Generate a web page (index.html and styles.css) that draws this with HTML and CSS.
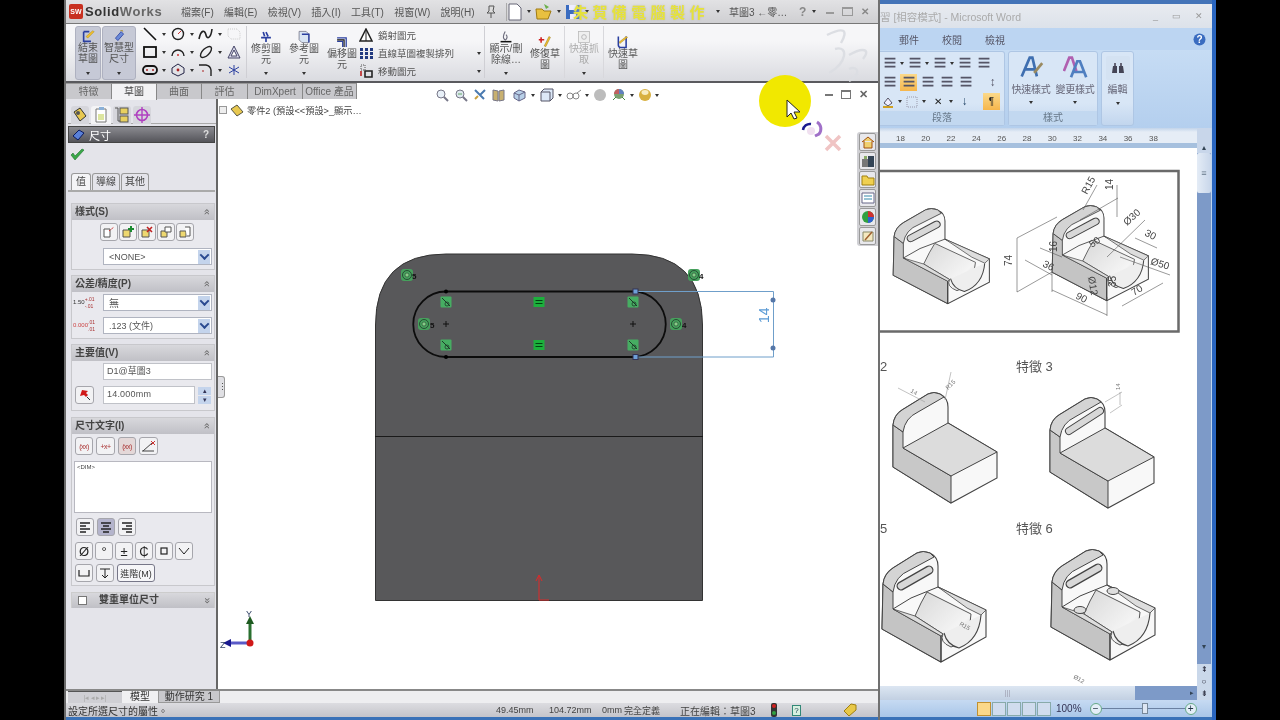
FILE: index.html
```html
<!DOCTYPE html>
<html lang="zh-Hant">
<head><meta charset="utf-8"><title>SolidWorks</title><link rel="stylesheet" href="styles.css"></head>
<body>
<div class="screen">
  <div class="sw">
    <header class="sw-title">
      <div class="logo"><span class="logo-mark">SW</span><span class="logo-solid">Solid</span><span class="logo-works">Works</span></div>
      <nav class="menu"><span>檔案(F)</span><span>編輯(E)</span><span>檢視(V)</span><span>插入(I)</span><span>工具(T)</span><span>視窗(W)</span><span>說明(H)</span></nav>
      <svg class="pin" width="12" height="14" viewBox="0 0 12 14"><path d="M4 1h5l-1 5 2 2H2l2-2zM6 8v5" fill="#ddd" stroke="#555"/></svg>
      <div class="quick">
        <svg width="16" height="18" viewBox="0 0 16 18"><path d="M2 1h8l4 4v12H2z" fill="#fff" stroke="#667"/></svg><i class="caret"></i>
        <svg width="18" height="18" viewBox="0 0 18 18"><path d="M1 6h6l2 2h7l-3 8H2z" fill="#e8c040" stroke="#a07a10"/><path d="M9 1l5 3-3 2" fill="#6ab04a"/></svg><i class="caret"></i>
        <svg width="16" height="16" viewBox="0 0 16 16"><path d="M1 1h14v14H1z" fill="#3a6cc0"/><path d="M4 1h8v5H4zM5 10h6v5H5z" fill="#eef"/></svg><i class="caret"></i>
      </div>
      <div class="banner">朱賀備電腦製作</div>
      <i class="caret cb"></i>
      <span class="doc-name">草圖3 ←零…</span>
      <span class="help">?</span><i class="caret"></i>
      <div class="win-btns"><span class="wb-min"></span><span class="wb-max"></span><span class="wb-x">✕</span></div>
    </header>

    <section class="ribbon">
      <div class="rb-big rb-on"><svg width="18" height="16" viewBox="0 0 18 16"><path d="M3 2v12h9M3 2h7" fill="none" stroke="#2a3fa0" stroke-width="2"/><path d="M8 10l8-8-2-1-8 7z" fill="#f0c030" stroke="#a08010" stroke-width=".5"/></svg><b>結束<br>草圖</b><i class="caret"></i></div>
      <div class="rb-big rb-on rb-wide"><svg width="16" height="16" viewBox="0 0 16 16"><path d="M3 10l7-8 3 3-7 8z" fill="#6a8ad8" stroke="#2a3fa0"/><path d="M9 1l2-1 1 2" fill="none" stroke="#a08010"/></svg><b>智慧型<br>尺寸</b><i class="caret"></i></div>
      <div class="tool-grid">
        <svg width="16" height="14" viewBox="0 0 16 14"><path d="M2 1l12 12" stroke="#111" stroke-width="1.6"/></svg><i class="caret"></i>
        <svg width="16" height="14" viewBox="0 0 16 14"><circle cx="8" cy="7" r="5.5" fill="none" stroke="#222" stroke-width="1.4"/><path d="M8 7l3-3" stroke="#c33"/></svg><i class="caret"></i>
        <svg width="16" height="14" viewBox="0 0 16 14"><path d="M1 12C3 2 7 3 8 8s5 3 6-6" fill="none" stroke="#222" stroke-width="1.6"/></svg><i class="caret"></i>
        <svg width="16" height="14" viewBox="0 0 16 14"><path d="M2 2h9l3 3v7H5l-3-3z" fill="none" stroke="#ccc" stroke-dasharray="1 1"/></svg>
        <svg width="16" height="14" viewBox="0 0 16 14"><rect x="2" y="2" width="12" height="10" fill="none" stroke="#111" stroke-width="1.8"/></svg><i class="caret"></i>
        <svg width="16" height="14" viewBox="0 0 16 14"><path d="M2 11a6 6 0 0 1 12 0" fill="none" stroke="#222" stroke-width="1.4"/><circle cx="8" cy="10" r="1" fill="#c33"/></svg><i class="caret"></i>
        <svg width="16" height="14" viewBox="0 0 16 14"><ellipse cx="8" cy="7" rx="7" ry="3.4" transform="rotate(-45 8 7)" fill="none" stroke="#222" stroke-width="1.4"/></svg><i class="caret"></i>
        <svg width="16" height="14" viewBox="0 0 16 14"><path d="M8 1l6 12H2z" fill="#dde" stroke="#446"/><path d="M8 5l3 6H5z" fill="#fff" stroke="#446"/></svg>
        <svg width="16" height="14" viewBox="0 0 16 14"><rect x="1" y="3" width="14" height="8" rx="4" fill="none" stroke="#111" stroke-width="1.8"/><circle cx="5" cy="7" r="1" fill="#a22"/><circle cx="11" cy="7" r="1" fill="#a22"/></svg><i class="caret"></i>
        <svg width="16" height="14" viewBox="0 0 16 14"><path d="M8 1l6 4v5l-6 3-6-3V5z" fill="none" stroke="#224"/><circle cx="8" cy="7" r="1.4" fill="#a22"/></svg><i class="caret"></i>
        <svg width="16" height="14" viewBox="0 0 16 14"><path d="M1 2h7a6 6 0 0 1 5 5v6" fill="none" stroke="#222" stroke-width="1.4"/><path d="M4 8h2" stroke="#a22"/></svg><i class="caret"></i>
        <svg width="16" height="14" viewBox="0 0 16 14"><path d="M8 2v10M3 4l10 6M13 4L3 10" stroke="#2a3fa0"/></svg>
      </div>
      <i class="rb-sep"></i>
      <div class="rb-col"><svg width="14" height="14" viewBox="0 0 20 20"><path d="M3 11h14M10 3l3 6M6 3l2 6M10 11v6" fill="none" stroke="#2a3fa0" stroke-width="2.400"/></svg><b>修剪圖<br>元</b><i class="caret"></i></div>
      <div class="rb-col"><svg width="14" height="14" viewBox="0 0 20 20"><path d="M3 2h10l4 4v12H7l-4-4z" fill="#d8e4f4" stroke="#667"/><path d="M7 6h10v12" fill="none" stroke="#2a3fa0" stroke-width="2"/></svg><b>參考圖<br>元</b><i class="caret"></i></div>
      <div class="rb-col rb-low"><svg width="14" height="14" viewBox="0 0 20 20"><path d="M3 4h13v13M3 9h8v8" fill="none" stroke="#2a3fa0" stroke-width="1.800"/><path d="M3 7h10v10" fill="none" stroke="#111" stroke-width="1.600"/></svg><b>偏移圖<br>元</b></div>
      <div class="rb-list">
        <div><svg width="14" height="14" viewBox="0 0 14 14"><path d="M7 1l6 12H1z" fill="#fff" stroke="#222" stroke-width="1.5"/><path d="M7 1v12" stroke="#222"/></svg><span>鏡射圖元</span></div>
        <div><svg width="14" height="14" viewBox="0 0 14 14"><path d="M1 2h3v3H1zM6 2h3v3H6zM11 2h3v3h-3zM1 6h3v3H1zM6 6h3v3H6zM11 6h3v3h-3zM1 10h3v3H1zM6 10h3v3H6zM11 10h3v3h-3z" fill="#223a80"/></svg><span>直線草圖複製排列</span><i class="caret"></i></div>
        <div><svg width="14" height="14" viewBox="0 0 14 14"><path d="M2 1h4v5H2z" fill="none" stroke="#555" stroke-dasharray="1 1"/><path d="M6 7h7v6H6z" fill="none" stroke="#222" stroke-width="1.6"/><path d="M2 7v5" stroke="#b22" stroke-width="1.6"/></svg><span>移動圖元</span><i class="caret"></i></div>
      </div>
      <i class="rb-sep"></i>
      <div class="rb-col rb-col-d"><svg width="14" height="14" viewBox="0 0 18 18"><path d="M2 15h14" stroke="#111" stroke-width="2"/><path d="M8 2c-3 5-3 9 0 11 3-2 3-5 1-7" fill="none" stroke="#667" stroke-width="1.4"/></svg><b>顯示/刪<br>除線…</b><i class="caret"></i></div>
      <div class="rb-col rb-low"><svg width="14" height="14" viewBox="0 0 18 18"><path d="M4 3v7M1 6h7" stroke="#d02020" stroke-width="2"/><path d="M10 15l6-12-2-1-6 12z" fill="#f0c030" stroke="#907010" stroke-width=".6"/></svg><b>修復草<br>圖</b></div>
      <i class="rb-sep rb-sep-f"></i>
      <div class="rb-col rb-dim"><svg width="14" height="14" viewBox="0 0 18 18"><rect x="2" y="2" width="14" height="14" fill="#eee" stroke="#aaa"/><circle cx="9" cy="9" r="3" fill="none" stroke="#999"/></svg><b>快速抓<br>取</b><i class="caret"></i></div>
      <i class="rb-sep rb-sep-f"></i>
      <div class="rb-col rb-low"><svg width="14" height="14" viewBox="0 0 18 18"><path d="M3 2v11q0 3 3 3h7V2" fill="none" stroke="#2a3fa0" stroke-width="2"/><path d="M5 11l10-8-2-1-9 7z" fill="#f0c030" stroke="#907010" stroke-width=".5"/></svg><b>快速草<br>圖</b></div>
      <svg class="ds" width="56" height="56" viewBox="0 0 56 56"><path d="M14 8C30 0 36 2 28 16M22 22c14-4 12 14-6 24M36 28c14-8 22-6 14 4M36 42c10-4 12 6 0 12" fill="none" stroke="#dcdee3" stroke-width="2.400"/></svg>
    </section>

    <div class="tab-row">
      <div class="cm-tabs"><span class="t1">特徵</span><span class="t2 cm-active">草圖</span><span class="t3">曲面</span><span class="t4">評估</span><span class="t5">DimXpert</span><span class="t6">Office 產品</span></div>
      <div class="viewbar">
        <svg width="14" height="14" viewBox="0 0 14 14"><circle cx="6" cy="6" r="4" fill="#e8f0f8" stroke="#778"/><path d="M9 9l4 4" stroke="#778" stroke-width="2"/></svg>
        <svg width="14" height="14" viewBox="0 0 14 14"><circle cx="6" cy="6" r="4" fill="#dde8ee" stroke="#778"/><path d="M9 9l4 4" stroke="#778" stroke-width="2"/><path d="M4 6h4" stroke="#6a6"/></svg>
        <svg width="14" height="14" viewBox="0 0 14 14"><path d="M2 2l9 9M12 2L7 7" stroke="#4a7ab0" stroke-width="2"/><path d="M2 11l3-3" stroke="#c9a040" stroke-width="2"/></svg>
        <svg width="14" height="14" viewBox="0 0 14 14"><path d="M1 2l5 1v10l-5-1zM7 3l5-1v10l-5 1z" fill="#c8b070" stroke="#778"/></svg>
        <svg class="v-gap" width="16" height="14" viewBox="0 0 16 14"><path d="M2 5l5-3 6 2v6l-6 3-5-3z" fill="#b8d0e8" stroke="#668"/><path d="M2 5l5 2 6-3M7 7v6" fill="none" stroke="#668"/></svg><i class="caret"></i>
        <svg class="v-gap" width="16" height="14" viewBox="0 0 16 14"><path d="M2 4l3-3h9v9l-3 3H2z" fill="#dce8f8" stroke="#556"/><path d="M2 4h9v9" fill="none" stroke="#556"/></svg><i class="caret"></i>
        <svg class="v-gap" width="16" height="14" viewBox="0 0 16 14"><circle cx="4" cy="8" r="3" fill="none" stroke="#888"/><circle cx="10" cy="8" r="3" fill="none" stroke="#888"/><path d="M11 5l4-3" stroke="#888"/></svg><i class="caret"></i>
        <svg class="v-gap" width="14" height="14" viewBox="0 0 14 14"><circle cx="7" cy="7" r="6" fill="#bcbcbc"/></svg>
        <svg class="v-gap" width="16" height="14" viewBox="0 0 16 14"><circle cx="8" cy="6" r="5" fill="#7aa070"/><path d="M3 6a5 5 0 0 1 5-5v5z" fill="#c06060"/><path d="M8 1a5 5 0 0 1 5 5H8z" fill="#6080c0"/><path d="M2 12l3-3M14 12l-3-3" stroke="#484"/></svg><i class="caret"></i>
        <svg class="v-gap" width="14" height="14" viewBox="0 0 14 14"><circle cx="7" cy="7" r="6" fill="#d8b040"/><ellipse cx="7" cy="4.5" rx="3.5" ry="2.4" fill="#f8ecc0"/></svg><i class="caret"></i>
      </div>
      <div class="doc-btns"><span class="db-min"></span><span class="db-max"></span><span class="db-x">✕</span></div>
    </div>

    <div class="work">
      <aside class="side">
        <div class="fm-tabs">
          <svg width="18" height="18" viewBox="0 0 18 18"><path d="M3 6l6-4 6 8-6 5z" fill="#e8c850" stroke="#333"/><circle cx="7" cy="7" r="2" fill="#555"/></svg>
          <svg class="fm-on" width="20" height="18" viewBox="0 0 20 18"><path d="M5 3h10v13H5z" fill="#fff" stroke="#777"/><path d="M7 8h6v6H7z" fill="#dde6a0"/><path d="M8 1h5v3H8z" fill="#8ab0d8"/></svg>
          <svg width="18" height="18" viewBox="0 0 18 18"><path d="M2 2h3v13h9" fill="none" stroke="#555"/><rect x="7" y="2" width="8" height="6" fill="#e8d060" stroke="#555"/><rect x="7" y="10" width="8" height="6" fill="#e8d060" stroke="#555"/></svg>
          <svg width="18" height="18" viewBox="0 0 18 18"><circle cx="9" cy="9" r="5.5" fill="none" stroke="#b040c0" stroke-width="1.6"/><path d="M9 1v16M1 9h16" stroke="#b040c0" stroke-width="1.4"/></svg>
        </div>
        <div class="pm-head"><svg width="14" height="12" viewBox="0 0 14 12"><path d="M1 7l6-6 5 3-6 7z" fill="#5a80d8" stroke="#0a1a60"/></svg><span>尺寸</span><b>?</b></div>
        <svg class="ok" width="15" height="13" viewBox="0 0 15 13"><path d="M1 7l4 5 9-10-2-1-7 7-2-3z" fill="#3aa848" stroke="#207030" stroke-width=".6"/></svg>
        <div class="sub-tabs"><span class="st-on">值</span><span>導線</span><span>其他</span></div>

        <section class="group g-style">
          <h3>樣式(S)<i class="chev">»</i></h3>
          <div class="five">
            <span class="ib"><svg width="12" height="12" viewBox="0 0 12 12"><path d="M1 3h6v8H1z" fill="#fff" stroke="#555"/><path d="M6 5l5-4" stroke="#c33" stroke-dasharray="2 1"/></svg></span>
            <span class="ib"><svg width="12" height="12" viewBox="0 0 12 12"><path d="M1 4h7v7H1z" fill="#eed870" stroke="#555"/><path d="M9 0v6M6 3h6" stroke="#1a8a30" stroke-width="2"/></svg></span>
            <span class="ib"><svg width="12" height="12" viewBox="0 0 12 12"><path d="M1 4h7v7H1z" fill="#eed870" stroke="#555"/><path d="M6 1l5 5M11 1L6 6" stroke="#c02020" stroke-width="1.6"/></svg></span>
            <span class="ib"><svg width="12" height="12" viewBox="0 0 12 12"><path d="M1 5h6v6H1z" fill="#eed870" stroke="#555"/><path d="M5 1h6v5H5z" fill="#fff" stroke="#555"/></svg></span>
            <span class="ib"><svg width="12" height="12" viewBox="0 0 12 12"><path d="M1 5h6v6H1z" fill="#eed870" stroke="#555"/><path d="M6 1h5v9H8" fill="#fff" stroke="#555"/></svg></span>
          </div>
          <div class="sel sel-a"><span>&lt;NONE&gt;</span><i class="drop"></i></div>
        </section>

        <section class="group g-tol">
          <h3>公差/精度(P)<i class="chev">»</i></h3>
          <div class="row-sel"><span class="tol-ico">1.50<small>+.01<br>-.01</small></span><div class="sel"><span class="lg">無</span><i class="drop"></i></div></div>
          <div class="row-sel r2"><span class="tol-ico red">0.000<small>.01<br>.01</small></span><div class="sel"><span>.123 (文件)</span><i class="drop"></i></div></div>
        </section>

        <section class="group g-prim">
          <h3>主要值(V)<i class="chev">»</i></h3>
          <div class="field f1">D1@草圖3</div>
          <div class="val-row">
            <span class="ib flip"><svg width="12" height="12" viewBox="0 0 12 12"><path d="M1 7l2-6 6 1-2 2 2 2-2 2-2-2z" fill="#d01818"/><path d="M8 8l3 3" stroke="#333"/></svg></span>
            <div class="field f2">14.000mm</div>
            <div class="spin"><i>▴</i><i>▾</i></div>
          </div>
        </section>

        <section class="group g-text">
          <h3>尺寸文字(I)<i class="chev">»</i></h3>
          <div class="ib-row r-top">
            <span class="ib w17 red-t">(xx)</span><span class="ib w19 red-t">+x+</span><span class="ib w18 red-t box-t">(xx)</span><span class="ib w19"><svg width="16" height="13" viewBox="0 0 16 13"><path d="M1 11h12M2 11l9-8" stroke="#444"/><path d="M10 1l4 4M14 1l-4 4" stroke="#c33"/></svg></span>
          </div>
          <div class="dim-text">&lt;DIM&gt;</div>
          <div class="ib-row r-align">
            <span class="ib w18"><svg width="12" height="11" viewBox="0 0 12 11"><path d="M1 1h10M1 4h6M1 7h10M1 10h6" stroke="#222" stroke-width="1.3"/></svg></span>
            <span class="ib w18 ib-on"><svg width="12" height="11" viewBox="0 0 12 11"><path d="M1 1h10M3 4h6M1 7h10M3 10h6" stroke="#222" stroke-width="1.3"/></svg></span>
            <span class="ib w18"><svg width="12" height="11" viewBox="0 0 12 11"><path d="M1 1h10M5 4h6M1 7h10M5 10h6" stroke="#222" stroke-width="1.3"/></svg></span>
          </div>
          <div class="ib-row r-sym">
            <span class="ib w18 sym">Ø</span><span class="ib w18 sym">°</span><span class="ib w18 sym">±</span><span class="ib w18 sym">₵</span><span class="ib w18"><svg width="10" height="10" viewBox="0 0 10 10"><rect x="2" y="2" width="6" height="6" fill="none" stroke="#222" stroke-width="1.2"/></svg></span><span class="ib w18"><svg width="12" height="8" viewBox="0 0 12 8"><path d="M1 1l5 6 5-6" fill="none" stroke="#222"/></svg></span>
          </div>
          <div class="ib-row r-adv">
            <span class="ib w18"><svg width="12" height="8" viewBox="0 0 12 8"><path d="M1 1v6h10V1" fill="none" stroke="#222" stroke-width="1.2"/></svg></span>
            <span class="ib w18"><svg width="12" height="12" viewBox="0 0 12 12"><path d="M1 2h10M6 2v9M3 8l3 3 3-3" fill="none" stroke="#222"/></svg></span>
            <span class="ib adv">進階(M)</span>
          </div>
        </section>

        <section class="group g-dual">
          <h3><i class="check"></i>雙重單位尺寸<i class="chev chev-d">»</i></h3>
        </section>
        <span class="grip">⋮</span>
      </aside>

      <div class="canvas">
        <div class="crumb"><i class="plus"></i><svg width="14" height="13" viewBox="0 0 14 13"><path d="M1 5l6-4 6 7-6 4z" fill="#e8c850" stroke="#554"/></svg><span>零件2 (預設&lt;&lt;預設&gt;_顯示…</span></div>
        <svg class="draw" width="660" height="591" viewBox="218 99 660 591">
          <defs>
            <g id="rel"><rect x="-5.500" y="-5.500" width="11" height="11" rx="1" fill="#46ad62"/><path d="M-4-4l8 8" stroke="#1d3a28"/><circle cx="1" cy="2" r="2" fill="none" stroke="#1d3a28" stroke-width=".8"/></g>
            <g id="eq"><rect x="-5.500" y="-5" width="11" height="10" fill="#1cb03c"/><path d="M-3.500-1.500h7M-3.500 1.500h7" stroke="#041"/></g>
            <g id="con"><rect x="-6" y="-6" width="12" height="12" rx="3" fill="#46a05c"/><circle r="4.500" fill="none" stroke="#1d3a28" stroke-width=".8"/><circle r="2" fill="#8c8" stroke="#1d3a28" stroke-width=".5"/></g>
          </defs>
          <path d="M375.500 600.500V325Q375.500 254 446 254H632Q702.500 254 702.500 325V600.500Z" fill="#58585a" stroke="#333"/>
          <path d="M375 436.500h328" stroke="#1a1a1a"/>
          <path d="M446 291.500H633A32.750 32.750 0 0 1 633 357H446A32.750 32.750 0 0 1 446 291.500Z" fill="none" stroke="#0c0c0c" stroke-width="1.800"/>
          <circle cx="446" cy="291.500" r="2" fill="#000"/><circle cx="446" cy="357" r="2" fill="#000"/>
          <path d="M443 324h6M446 321v6M630 324h6M633 321v6" stroke="#111"/>
          <use href="#rel" x="446" y="302"/><use href="#rel" x="446" y="345"/><use href="#rel" x="633" y="302"/><use href="#rel" x="633" y="345"/>
          <use href="#eq" x="539" y="302"/><use href="#eq" x="539" y="345"/>
          <use href="#con" x="424" y="324"/><use href="#con" x="676" y="324"/><use href="#con" x="407" y="275"/><use href="#con" x="694" y="275"/>
          <g class="rel-no"><text x="430" y="328">5</text><text x="682" y="328">4</text><text x="412" y="279">5</text><text x="699" y="279">4</text></g>
          <path d="M636 291.500H773.500V357H636" fill="none" stroke="#6f9fca"/>
          <circle cx="773" cy="300" r="2.500" fill="#5577a8"/><circle cx="773" cy="348" r="2.500" fill="#5577a8"/>
          <rect x="633" y="289" width="5" height="5" fill="#6f9fd8" stroke="#335"/><rect x="633" y="354.500" width="5" height="5" fill="#6f9fd8" stroke="#335"/>
          <text class="dim-14" transform="translate(769 323) rotate(-90)">14</text>
          <path d="M539 600v-24M536 581l3-6 3 6M539 600h10" fill="none" stroke="#e02828"/>
          <path d="M250 643v-20" stroke="#2a7030" stroke-width="3"/><path d="M246 624l4-8 4 8z" fill="#1e5a20"/>
          <path d="M250 643h-20" stroke="#5a5ac8" stroke-width="3"/><path d="M231 639l-8 4 8 4z" fill="#1a1a90"/>
          <circle cx="250" cy="643" r="3.500" fill="#d01818"/>
          <text class="axis" x="246" y="617">Y</text><text class="axis" x="220" y="648">Z</text>
        </svg>
        <div class="taskpane">
          <span><svg width="14" height="14" viewBox="0 0 14 14"><path d="M1 7l6-5 6 5M3 6v7h8V6" fill="#f0d070" stroke="#a05010"/></svg></span>
          <span><svg width="14" height="14" viewBox="0 0 14 14"><path d="M1 5h6v8H1z" fill="#777"/><path d="M7 2h6v11H7z" fill="#345"/><path d="M3 2h3v3H3z" fill="#8a6"/></svg></span>
          <span><svg width="14" height="14" viewBox="0 0 14 14"><path d="M1 3h5l1 2h6v7H1z" fill="#f0d050" stroke="#a08010"/></svg></span>
          <span><svg width="14" height="14" viewBox="0 0 14 14"><path d="M1 2h12v10H1z" fill="#fff" stroke="#668"/><path d="M3 5h8M3 8h8" stroke="#38a"/></svg></span>
          <span><svg width="14" height="14" viewBox="0 0 14 14"><circle cx="7" cy="7" r="6" fill="#30a040"/><path d="M7 1a6 6 0 0 1 6 6H7z" fill="#d03030"/><path d="M7 7h6a6 6 0 0 1-6 6z" fill="#3060d0"/></svg></span>
          <span><svg width="14" height="14" viewBox="0 0 14 14"><path d="M2 3h10v9H2z" fill="#f4e8c0" stroke="#886"/><path d="M4 11l7-8" stroke="#a06030" stroke-width="1.5"/></svg></span>
        </div>
      </div>
    </div>

    <div class="model-row">
      <div class="nav-arrows"><i>|◂</i><i>◂</i><i>▸</i><i>▸|</i></div>
      <span class="mt-on">模型</span><span class="mt-off">動作研究 1</span>
    </div>
    <footer class="status">
      <span class="st-msg">設定所選尺寸的屬性。</span>
      <span class="st-a">49.45mm</span><span class="st-b">104.72mm</span><span class="st-c">0mm</span><span class="st-d">完全定義</span><span class="st-e">正在編輯：草圖3</span>
      <svg class="st-light" width="8" height="14" viewBox="0 0 8 14"><rect x="1" y="0" width="6" height="14" rx="2" fill="#333"/><circle cx="4" cy="3" r="2" fill="#d02020"/><circle cx="4" cy="10" r="2" fill="#30a040"/></svg>
      <span class="st-q">?</span>
      <svg class="st-tag" width="14" height="14" viewBox="0 0 14 14"><path d="M1 8l7-7 5 1 0 5-7 6z" fill="#e8c848" stroke="#a08010"/></svg>
    </footer>

    <div class="spot"></div>
    <svg class="cursor" width="76" height="70" viewBox="0 0 76 70"><path d="M2 2v17l4-4 3 6 3-1-3-6h6z" fill="#fff" stroke="#222"/><path d="M26 26a7 7 0 0 0-8 6" fill="none" stroke="#1a1a90" stroke-width="2.500"/><path d="M32 24a8 8 0 0 1 2 12l-4 2" fill="none" stroke="#a070c8" stroke-width="3"/><circle cx="26" cy="33" r="4" fill="#f0e0f0"/><path d="M41 38l14 14M55 38L41 52" stroke="#f0c4c4" stroke-width="3.500"/></svg>
  </div>

  <div class="word">
    <div class="wd-top"></div>
    <header class="wd-title"><span>習 [相容模式] - Microsoft Word</span><div class="wd-btns"><i>_</i><i>▭</i><i>✕</i></div></header>
    <nav class="wd-tabs"><span>郵件</span><span>校閱</span><span>檢視</span><svg width="13" height="13" viewBox="0 0 13 13"><circle cx="6.500" cy="6.500" r="6" fill="#3a6cc0"/><text class="wd-q" x="6.500" y="10">?</text></svg></nav>
    <section class="wd-ribbon">
      <div class="wg wg-para">
        <div class="wg-rows">
          <div class="wr wr1"><span>☰</span><i class="caret"></i><span>☰</span><i class="caret"></i><span>☰</span><i class="caret"></i><span>☰</span><span>☰</span></div>
          <div class="wr wr2"><span>☰</span><span class="hot">☰</span><span>☰</span><span>☰</span><span>☰</span><b class="gap"></b><span>↕</span></div>
          <div class="wr wr3"><svg width="14" height="14" viewBox="0 0 14 14"><path d="M3 8l4-5 4 5-4 3z" fill="#eef" stroke="#556"/><path d="M2 12h10" stroke="#d0a020" stroke-width="2"/></svg><i class="caret"></i><svg width="14" height="14" viewBox="0 0 14 14"><rect x="2" y="2" width="10" height="10" fill="none" stroke="#99a" stroke-dasharray="1 1"/></svg><i class="caret"></i><span class="bk">✕</span><i class="caret"></i><span class="az">↓</span><span class="hot bk hot2">¶</span></div>
        </div>
        <label>段落</label>
      </div>
      <div class="wg wg-style">
        <div class="big-row">
          <div><svg width="25" height="25" viewBox="0 0 28 28"><path d="M3 24L12 3h3l5 21M7 16h10" fill="none" stroke="#3f6fb0" stroke-width="3"/><path d="M17 20l9-11" stroke="#9a8a60" stroke-width="3"/></svg><span>快速樣式</span><i class="caret"></i></div>
          <div><svg width="25" height="25" viewBox="0 0 28 28"><path d="M1 18L7 3h3l5 15" fill="none" stroke="#b060b0" stroke-width="3"/><path d="M9 25l7-18h3l7 18M12 19h11" fill="none" stroke="#4f7fc0" stroke-width="3"/></svg><span>變更樣式</span><i class="caret"></i></div>
        </div>
        <label>樣式</label>
      </div>
      <div class="wg wg-edit">
        <span class="bino"><svg width="14" height="12" viewBox="0 0 14 12"><path d="M2 4h4v7H1zM8 4h4l1 7H8z" fill="#445"/><path d="M3 1h2v3H3zM9 1h2v3H9z" fill="#667"/></svg></span>
        <span>編輯</span><i class="caret"></i>
      </div>
    </section>
    <div class="wd-main">
      <div class="wd-doc">
        <div class="ruler"><span>18</span><span>20</span><span>22</span><span>24</span><span>26</span><span>28</span><span>30</span><span>32</span><span>34</span><span>36</span><span>38</span></div>
        <svg class="sheet" width="317" height="538" viewBox="880 148 317 538">
          <defs>
            <linearGradient id="gr" x1="0" y1="0" x2="1" y2="1"><stop offset="0" stop-color="#d8d8d8"/><stop offset=".7" stop-color="#f4f4f4"/><stop offset="1" stop-color="#c8c8c8"/></linearGradient>
            <g id="block">
              <path d="M1052 582Q1053 572 1062 566L1086 551Q1092 548 1099 551Q1107 555 1107 564V585L1155 608V635L1110 660L1051 627Z" fill="#f8f8f8" stroke="#444" stroke-width="1.100"/>
              <path d="M1052 582L1062 590V607L1110 634V660L1051 627Z" fill="#c4c4c4" stroke="#444" stroke-width="1"/>
              <path d="M1052 582Q1053 572 1062 566L1086 551Q1092 548 1099 551L1103 555L1079 568Q1064 574 1062 590Z" fill="#d4d4d4" stroke="#444" stroke-width="1"/>
              <path d="M1070 584L1098 568" stroke="#444" stroke-width="9" stroke-linecap="round"/><path d="M1070 584L1098 568" stroke="#d8d8d8" stroke-width="6.500" stroke-linecap="round"/>
              <path d="M1062 607L1080 596L1107 585" fill="none" stroke="#444" stroke-width="1"/>
              <path d="M1096 590L1140 612Q1138 640 1120 645Q1108 640 1112 632L1084 614Q1090 600 1096 590Z" fill="url(#gr)" stroke="#555" stroke-width="1"/>
              <path d="M1107 585L1155 608L1150 613L1136 606Z" fill="#ddd" stroke="#444" stroke-width=".8"/>
              <path d="M1062 607L1084 614L1112 632L1110 634Z" fill="#ddd" stroke="#444" stroke-width=".8"/>
              <path d="M1150 613Q1148 638 1128 646Q1116 643 1113 631" fill="#eee" stroke="#444" stroke-width="1.100"/>
              <path d="M1110 634V660" stroke="#333" stroke-width="1"/>
            </g>
            <g id="slab">
              <path d="M893 425Q894 415 902 410L928 394Q934 391 940 394Q948 398 948 407V423L997 452V478L951 503L893 467Z" fill="#f8f8f8" stroke="#444" stroke-width="1.100"/>
              <path d="M893 425L903 432V448L951 476V503L893 467Z" fill="#c8c8c8" stroke="#444"/>
              <path d="M903 448L948 423L997 452L951 476Z" fill="#dcdcdc" stroke="#444"/>
              <path d="M893 425Q894 415 902 410L928 394Q934 391 940 394L944 397L918 412Q905 418 903 432Z" fill="#d4d4d4" stroke="#444"/>
            </g>
          </defs>
          <rect x="875" y="171" width="303.500" height="160.500" fill="#fff" stroke="#6a6a6a" stroke-width="2.500"/>
          <use href="#block" transform="translate(-79 -264) scale(.925 .86)"/>
          <use href="#block" transform="translate(80 -267) scale(.925 .86)"/>
          <path class="dims" fill="none" d="M1017 238V292M1017 238L1057 217M1017 292L1052 272M1025 260L1052 275M1040 248L1062 257M1052 272V292M1052 290L1107 315M1107 297V316M1122 306L1163 283M1097 185L1083 210M1117 185V217M1118 198L1080 220M1145 220L1107 257M1135 238L1157 248M1120 257L1170 275"/>
          <g class="dim-t">
            <text transform="translate(1012 266) rotate(-90)">74</text>
            <text transform="translate(1042 266) rotate(28)">36</text>
            <text transform="translate(1057 252) rotate(-90)">16</text>
            <text transform="translate(1075 298) rotate(28)">90</text>
            <text transform="translate(1088 277) rotate(80)">Ø12</text>
            <text transform="translate(1116 287) rotate(-90)">35</text>
            <text transform="translate(1134 296) rotate(-32)">70</text>
            <text transform="translate(1087 195) rotate(-62)">R15</text>
            <text transform="translate(1113 190) rotate(-90)">14</text>
            <text transform="translate(1127 226) rotate(-42)">Ø30</text>
            <text transform="translate(1144 235) rotate(28)">30</text>
            <text transform="translate(1150 264) rotate(18)">Ø50</text>
            <text transform="translate(1092 248) rotate(-35)">50</text>
          </g>
          <text class="fig" x="880" y="371">2</text><text class="fig" x="1016" y="371">特徵 3</text>
          <text class="fig" x="880" y="533">5</text><text class="fig" x="1016" y="533">特徵 6</text>
          <use href="#slab"/>
          <path class="dims thin" d="M898 388L925 402M951 372L945 400"/>
          <text class="dim-s" transform="translate(910 392) rotate(30)">14</text>
          <text class="dim-s" transform="translate(948 390) rotate(-45)">R15</text>
          <use href="#slab" transform="translate(157 5)"/>
          <path d="M1069 431L1100 411" stroke="#444" stroke-width="8" stroke-linecap="round"/><path d="M1069 431L1100 411" stroke="#d8d8d8" stroke-width="6" stroke-linecap="round"/>
          <path class="dims thin" d="M1105 402L1122 392M1110 413L1122 405M1120 392V405"/>
          <text class="dim-s" transform="translate(1120 390) rotate(-90)">14</text>
          <use href="#block" transform="translate(-169 2)"/>
          <text class="dim-s" transform="translate(959 625) rotate(30)">R15</text>
          <use href="#block"/>
          <ellipse cx="1113" cy="591" rx="6" ry="3.500" fill="#ddd" stroke="#444"/><ellipse cx="1080" cy="610" rx="6" ry="3.500" fill="#ddd" stroke="#444"/>
          <text class="dim-s" transform="translate(1073 678) rotate(30)">Ø12</text>
        </svg>
        <div class="hscroll"><span class="hthumb">|||</span><span class="hrest">▸</span></div>
      </div>
      <div class="wd-scroll">
        <i class="ws-up">▴</i><span class="ws-thumb">≡</span><i class="ws-down">▾</i><i class="ws-s">⇞</i><i class="ws-s">○</i><i class="ws-s">⇟</i>
      </div>
    </div>
    <footer class="wd-status">
      <div class="views"><i class="v-on"></i><i></i><i></i><i></i><i></i></div>
      <span class="pct">100%</span>
      <b class="zoom-btn">−</b><div class="slider"><i></i></div><b class="zoom-btn">+</b>
    </footer>
    <div class="wd-foot"></div>
  </div>
</div>
</body>
</html>
```
FILE: styles.css
```css
*{box-sizing:border-box}
html,body{margin:0;padding:0;background:#000;overflow:hidden}
body{font-family:"Liberation Sans","Noto Sans CJK TC",sans-serif;font-size:10px;color:#444}
svg{display:block;flex:none}
i{font-style:normal}
.screen{width:1280px;height:720px;display:flex;padding:0 64px;filter:blur(.35px)}
.caret{display:block;width:0;height:0;border:2px solid transparent;border-top:3px solid #333;border-bottom:0;flex:none}

.sw{position:relative;width:816px;height:720px;display:flex;flex-direction:column;background:#e6e6ea;border-left:2px solid #6a6a6a;border-right:2px solid #707070}
.sw-title{height:24px;display:flex;align-items:center;background:linear-gradient(#e2e2e4,#cfcfd2);border-bottom:1px solid #777;padding-left:3px}
.logo{display:flex;align-items:center;width:112px;font-size:13px;font-weight:bold;letter-spacing:.6px;flex:none}
.logo-mark{width:14px;height:15px;background:#c83020;color:#fff;font-size:7px;line-height:15px;text-align:center;letter-spacing:0;margin-right:2px;border-radius:2px}
.logo-solid{color:#333}.logo-works{color:#666}
.menu{display:flex;gap:10.300px;font-size:10px;color:#555;width:305px;flex:none}
.menu span{white-space:nowrap}
.pin{margin-left:-1px}
.quick{display:flex;align-items:center;gap:4px;margin-left:9px;width:77px;border-left:1px solid #aaa;flex:none}
.banner{font-size:15px;font-weight:bold;color:#e6e23a;letter-spacing:4.400px;width:140px;white-space:nowrap;margin-left:-10px;flex:none;text-shadow:0 0 2px #bbb}
.cb{margin-left:3px}
.doc-name{margin-left:9px;width:68px;white-space:nowrap;color:#555;font-size:10px;flex:none}
.help{font-size:12px;font-weight:bold;color:#888;margin-left:2px;margin-right:6px}
.win-btns{display:flex;align-items:center;gap:8px;margin-left:10px;color:#888}
.wb-min{width:8px;height:2px;background:#999;margin-top:3px}
.wb-max{width:11px;height:9px;border:1px solid #999;border-top-width:2px}
.wb-x{font-size:10px;font-weight:bold}

.ribbon{position:relative;height:59px;display:flex;background:linear-gradient(#f6f6f8 30%,#dadbe0);border-bottom:2px solid #5a5a5e;padding:2px 0 0 9px}
.ribbon b{font-weight:normal;line-height:10.500px;font-size:10px;color:#555}
.rb-big{width:26px;height:54px;display:flex;flex-direction:column;align-items:center;text-align:center;padding-top:1px;margin-right:1px;border-radius:3px}
.rb-big>svg{width:15px;height:13px;margin-top:2px}
.rb-big .caret{margin-top:auto;margin-bottom:4px}
.rb-wide{width:34px}
.rb-on{background:#c6c9d6;border:1px solid #aeb1c0}
.tool-grid{display:grid;grid-template-columns:16px 12px 16px 12px 16px 12px 16px;grid-template-rows:18px 18px 18px;align-items:center;justify-items:center;margin:-1px 0 0 5px;width:104px;flex:none}
.rb-sep{width:1px;height:52px;background:#cfcfd4;flex:none}
.rb-col{width:38px;display:flex;flex-direction:column;align-items:center;text-align:center;padding-top:3px;height:54px;flex:none}
.rb-col>svg{margin-top:1px}
.rb-col .caret{margin-top:auto;margin-bottom:5px}
.rb-low{padding-top:8px}
.rb-list{width:125px;display:flex;flex-direction:column;margin-left:-2px;flex:none}
.rb-list>div{height:18px;display:flex;align-items:center;gap:5px;font-size:9.500px;color:#555;white-space:nowrap}
.rb-list>div .caret{margin-left:auto;margin-right:3px}
.rb-col-d{margin-left:1px;width:40px}
.rb-dim b{color:#aaa}.rb-dim svg{opacity:.8}
.rb-sep-f{background:#d8d8dc}
.ds{position:absolute;right:9px;top:3px}

.tab-row{height:16px;display:flex;align-items:flex-start;background:#fff;position:relative;z-index:1}
.cm-tabs{display:flex;height:16px;background:#c8c8cc;font-size:10px;color:#666;width:291px;flex:none}
.cm-tabs span{display:block;text-align:center;line-height:15px;border-right:1px solid #888;border-top:1px solid #999;white-space:nowrap}
.t1{width:46px}.t2{width:45px}.t3{width:45px}.t4{width:46px}.t5{width:55px}.t6{width:54px}
.cm-active{background:#f2f2f4;height:17px;color:#444;position:relative}
.viewbar{display:flex;align-items:center;gap:3px;margin:5px 0 0 78px;height:14px;flex:none}
.viewbar svg{margin-right:2px}
.viewbar .v-gap{margin:0 0 0 1px}
.doc-btns{display:flex;align-items:center;gap:8px;margin:5px 10px 0 auto;color:#666}
.db-min{width:8px;height:2px;background:#777}
.db-max{width:10px;height:9px;border:1px solid #777;border-top-width:2px}
.db-x{font-size:11px;font-weight:bold}

.work{flex:1;display:flex;min-height:0}
.side{position:relative;width:152px;flex:none;background:#e4e4ea;border-right:2px solid #666;padding:7px 0 0 2px}
.fm-tabs{display:flex;gap:2px;height:18px;padding-left:3px;align-items:center;border-bottom:1px solid #aaa}
.fm-tabs svg{background:#d6d6dc;border-radius:3px 3px 0 0}
.fm-tabs .fm-on{background:#f4f4f6}
.pm-head{height:17px;margin:2px 1px 0 0;background:linear-gradient(#8a8a90,#55555a);color:#fff;display:flex;align-items:center;gap:3px;padding:0 5px 0 3px;font-size:11px;width:147px;border:1px solid #444}
.pm-head b{margin-left:auto;font-size:10px;color:#ddd}
.ok{margin:5px 0 0 2px}
.sub-tabs{display:flex;gap:1px;margin-top:12px;height:19px;padding-left:3px;border-bottom:2px solid #aaa;width:147px}
.sub-tabs span{border:1px solid #999;border-bottom:0;height:17px;line-height:15px;padding:0 3px;font-size:10px;border-radius:3px 3px 0 0;color:#444}
.st-on{background:#f4f4f6;padding:0 4px !important}

.group{width:144px;margin-left:3px;border:1px solid #c8c8cc;background:#e9e9ee;position:relative}
.group h3{margin:0;height:16px;background:linear-gradient(#d8d8dc,#c0c0c6);font-size:10px;font-weight:bold;color:#444;line-height:15px;padding-left:3px;display:flex;white-space:nowrap}
.chev{margin:0 4px 0 auto;font-weight:normal;font-size:11px;color:#666;line-height:14px;transform:rotate(-90deg)}
.chev-d{transform:rotate(90deg)}
.g-style{margin-top:11px;height:67px}
.five{display:flex;gap:1px;margin:3px 0 0 28px}
.ib{display:flex;align-items:center;justify-content:center;width:18px;height:18px;background:#f2f2f4;border:1px solid #a6a6ac;border-radius:3px;flex:none;font-size:8px;color:#333}
.sel{display:flex;align-items:center;justify-content:space-between;height:17px;width:109px;background:#fff;border:1px solid #b0b4c0;font-size:9px;color:#555;padding:0 1px 0 5px;flex:none}
.sel-a{margin:7px 0 0 31px}
.lg{font-size:10px}
.drop{width:12px;height:14px;background:#c4d4ec;display:flex;align-items:center;justify-content:center;flex:none}
.drop::after{content:"";width:5px;height:5px;border:solid #2a4a90;border-width:0 2px 2px 0;transform:rotate(45deg) translate(-1px,-1px)}
.g-tol{margin-top:5px;height:64px}
.row-sel{display:flex;align-items:center;margin-top:2px;height:17px}
.r2{margin-top:6px}
.tol-ico{width:31px;display:flex;align-items:center;font-size:6px;padding-left:1px;color:#333;line-height:7px}
.tol-ico small{font-size:5px;color:#a33}
.red{color:#c44}
.g-prim{margin-top:5px;height:67px}
.field{height:17px;background:#fff;border:1px solid #c0c2c8;font-size:9px;line-height:15px;padding-left:3px;color:#555}
.f1{width:109px;margin:2px 0 0 31px}
.val-row{display:flex;align-items:center;gap:3px;margin-top:6px}
.flip{margin:0 6px 0 3px;width:19px}
.f2{width:92px;height:18px;letter-spacing:.2px}
.spin{display:flex;flex-direction:column;gap:1px}
.spin i{display:block;width:13px;height:8px;background:#c4d4ec;font-size:7px;line-height:8px;text-align:center;color:#335}
.g-text{margin-top:6px;height:169px}
.ib-row{display:flex;gap:3px}
.r-top{margin:3px 0 0 3px}
.w17{width:18px}.w18{width:18px}.w19{width:19px}
.red-t{color:#a33;font-size:7px;letter-spacing:-.5px}
.box-t{background:#e4d8d8}
.dim-text{width:138px;height:52px;margin:6px 0 0 2px;background:#fff;border:1px solid #b8b8c0;font-size:6px;padding:2px;color:#444}
.r-align{margin:5px 0 0 4px}
.ib-on{background:#b4b4cc}
.r-sym{margin:6px 0 0 3px;gap:2px}
.r-adv{margin:4px 0 0 3px;gap:3px}
.sym{font-size:13px;color:#222}
.adv{width:38px;font-size:9px;background:#f6f6f8;border-color:#778}
.g-dual{margin-top:6px;height:16px;border-color:#ccc}
.g-dual h3{height:15px;line-height:14px}
.check{width:9px;height:9px;background:#fff;border:1px solid #777;margin:3px 12px 0 3px}
.grip{position:absolute;right:-9px;top:277px;width:7px;height:22px;background:#e0e0e4;border:1px solid #999;border-left:0;border-radius:0 3px 3px 0;font-size:9px;line-height:20px;text-align:center;z-index:2}

.canvas{position:relative;flex:1;background:#fff;overflow:hidden}
.crumb{position:absolute;left:1px;top:4px;display:flex;align-items:center;gap:3px;font-size:9.200px;color:#444;white-space:nowrap}
.plus{width:8px;height:8px;border:1px solid #999;background:#eee}
.draw{position:absolute;left:0;top:0}
.rel-no text{font-size:8px;font-weight:bold;fill:#111}
.dim-14{font-size:14px;fill:#5b9bd5}
.axis{font-size:9px;fill:#346}
.taskpane{position:absolute;right:0;top:33px;width:21px;height:114px;background:#d0d0d4;border-radius:3px 0 0 3px;display:flex;flex-direction:column;gap:1px;padding:1px 2px}
.taskpane span{height:18px;display:flex;align-items:center;justify-content:center;background:#e8e8ec;border:1px solid #999;border-radius:2px}

.model-row{height:14px;display:flex;background:#eeeef0;border-top:2px solid #888;padding-left:2px;font-size:10px;line-height:12px;color:#333}
.nav-arrows{width:54px;display:flex;gap:1px;background:#cfcfd4;color:#aaa;font-size:7px;justify-content:center;border-top:1px solid #555}
.mt-on{width:36px;text-align:center;background:#f0f0f2}
.mt-off{width:62px;text-align:center;background:#c8c8cc;border:1px solid #999;border-top:0}
.status{height:14px;display:flex;align-items:center;background:linear-gradient(#dcdce0,#c4c4ca);font-size:9px;color:#444;white-space:nowrap;position:relative;padding-left:2px}
.st-msg{font-size:10px;width:428px;color:#333}
.st-a{width:53px}.st-b{width:53px}.st-c{width:22px}.st-d{width:56px}.st-e{width:90px;font-size:10px}
.st-light{margin-right:14px}
.st-q{width:9px;height:11px;background:#d8f0e0;border:1px solid #387;color:#245;text-align:center;font-size:8px;line-height:9px;margin-right:42px}
.sw::after{content:"";height:3px;background:#3a72b8;flex:none}

.spot{position:absolute;left:693px;top:75px;width:52px;height:52px;border-radius:50%;background:#f1e800;z-index:3}
.cursor{position:absolute;left:719px;top:98px;z-index:4}

.word{width:336px;height:720px;display:flex;flex-direction:column;background:#bfd4ee;border-right:4px solid #2a66c0}
.wd-top{height:4px;background:#4474b8}
.wd-title{height:24px;background:linear-gradient(#e8ebf0,#dce2ea);display:flex;align-items:center;font-size:10.500px;color:#aaa;white-space:nowrap}
.wd-btns{margin-left:auto;display:flex;gap:14px;margin-right:9px;color:#999;font-size:9px}
.wd-tabs{height:22px;background:#bcd5f2;display:flex;align-items:center;font-size:10px;color:#556}
.wd-tabs span:nth-child(1){margin-left:19px}
.wd-tabs span:nth-child(2){margin-left:23px}
.wd-tabs span:nth-child(3){margin-left:23px}
.wd-tabs svg{margin-left:auto;margin-right:6px}
.wd-q{font-size:10px;fill:#fff;text-anchor:middle;font-weight:bold}
.wd-ribbon{height:78px;display:flex;background:linear-gradient(#c6dcf4,#b4cfee);padding:1px 0 2px;gap:3px}
.wg{display:flex;flex-direction:column;background:linear-gradient(#d8e6f6 70%,#c2d6ee);border:1px solid #aec6e4;border-radius:0 3px 3px 0;font-size:10px;color:#667}
.wg label{margin-top:auto;text-align:center;height:14px;background:#c2d8f0;line-height:14px;font-size:10px;color:#678}
.wg-para{width:125px;border-left:0}
.wg-rows{display:flex;flex-direction:column;padding-top:2px}
.wr{height:19px;display:flex;align-items:center;gap:2px;font-size:12px;color:#556;padding-left:1px}
.wr span{width:17px;text-align:center;line-height:17px;flex:none}
.wr3{gap:3px}
.gap{width:6px;flex:none}
.hot{background:linear-gradient(#fbd98a,#f6b64c);height:17px}
.wr .hot2{margin-left:7px}
.bk{color:#222;font-size:10px}
.az{color:#246;font-size:12px}
.wg-style{width:90px;border-radius:3px}
.big-row{display:flex;justify-content:space-around;padding-top:3px;height:58px}
.big-row>div{display:flex;flex-direction:column;align-items:center;width:44px;white-space:nowrap}
.big-row span{margin-top:1px;font-size:10px;letter-spacing:-.2px}
.big-row .caret{margin-top:5px}
.wg-edit{width:33px;border-radius:3px;align-items:center;padding-top:4px}
.bino{width:24px;height:24px;background:#d4e2f2;display:flex;align-items:center;justify-content:center;margin-bottom:1px;border-radius:2px}
.wg-edit .caret{margin-top:6px}
.wd-main{flex:1;display:flex;min-height:0;padding-right:1px}
.wd-doc{width:317px;display:flex;flex-direction:column;background:#fff}
.ruler{height:20px;background:linear-gradient(#c2d4ea 0,#e6edf6 20%,#e6edf6 75%,#a6c0de 76%);display:flex;align-items:flex-start;font-size:8px;color:#555;padding:6px 0 0 16px;gap:16.400px}
.sheet{flex:1}
.hscroll{height:14px;display:flex;background:#c8d6e8;font-size:7px;color:#99a;line-height:14px}
.hthumb{width:255px;background:linear-gradient(#dce6f2,#c2d0e2);text-align:center}
.hrest{flex:1;background:#7d9ac8;color:#345;text-align:right;padding-right:3px}
.wd-scroll{width:14px;background:#7d9ac8;display:flex;flex-direction:column;align-items:center;color:#345;font-size:8px;line-height:10px;flex:none}
.ws-up{height:25px;width:14px;background:#c8d6ea;text-align:center;line-height:40px}
.ws-thumb{width:14px;height:40px;background:linear-gradient(90deg,#e4ecf6,#c8d6ea);text-align:center;line-height:40px;border-radius:2px;color:#678;font-size:9px}
.ws-down{margin-top:auto;margin-bottom:12px}
.ws-s{background:#cad8ea;width:14px;height:12px;text-align:center;line-height:12px;color:#223}
.wd-status{height:17px;display:flex;align-items:center;background:linear-gradient(#c6daf2,#a9c6e8)}
.views{display:flex;gap:1px;margin-left:97px}
.views i{display:block;width:14px;height:14px;background:#d0dcee;border:1px solid #8aa}
.views .v-on{background:#fbd88a;border-color:#c09030}
.pct{margin-left:5px;font-size:10px;color:#335}
.zoom-btn{width:12px;height:12px;border-radius:50%;background:#e4eef8;border:1px solid #6a8;text-align:center;line-height:10px;font-weight:normal;color:#234;flex:none}
.zoom-btn:nth-of-type(1){margin-left:8px}
.slider{width:83px;height:1px;background:#6a80a0;position:relative}
.slider i{position:absolute;left:40px;top:-5px;width:6px;height:11px;background:#dde6f2;border:1px solid #789}
.wd-foot{height:3px;background:#3a72b8}

.dims{stroke:#555;stroke-width:.6}
.dims.thin{fill:none;stroke:#999}
.dim-t text{font-size:10px;fill:#444}
.dim-s{font-size:6px;fill:#777}
.fig{font-size:13px;fill:#555}
```
